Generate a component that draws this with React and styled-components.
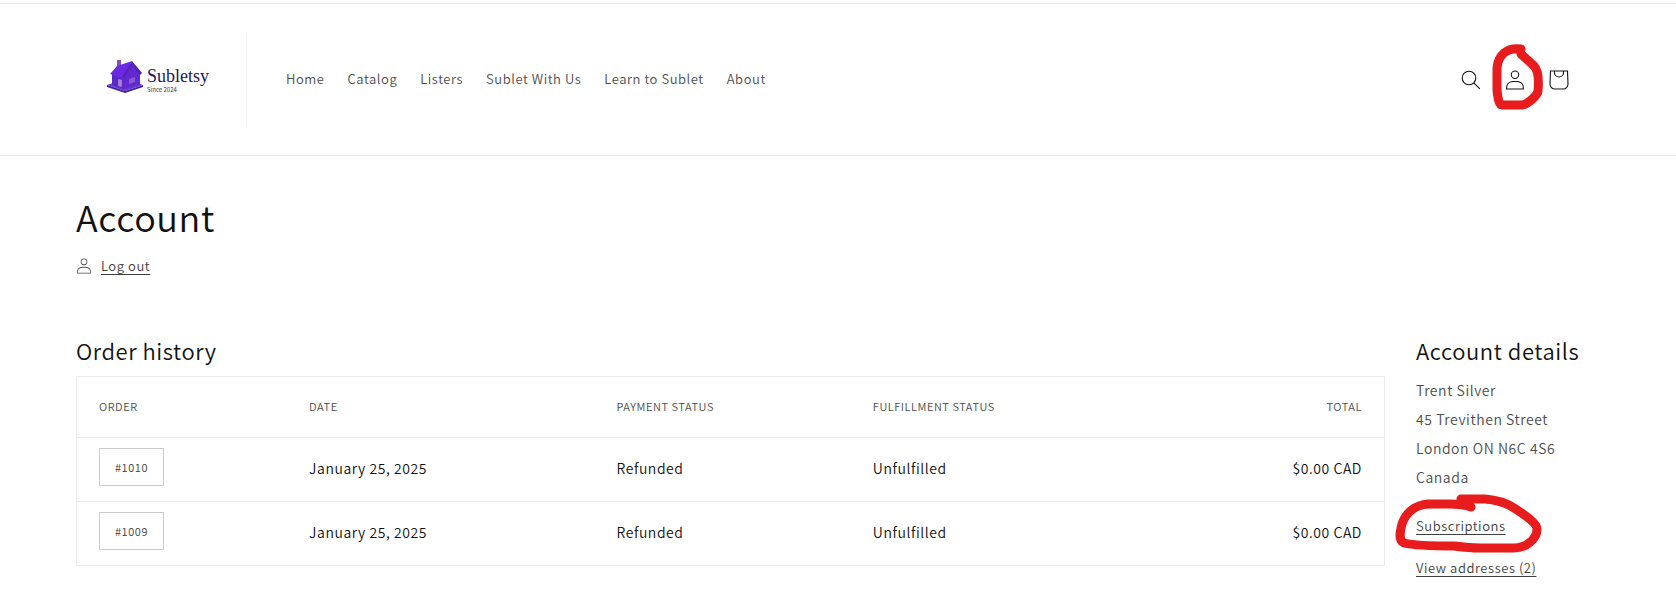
import React from 'react';
import styled, { createGlobalStyle } from 'styled-components';

const GlobalStyle = createGlobalStyle`
    * {
        box-sizing: border-box;
    }
    body {
        margin: 0;
        background-color: #ffffff;
        color: #121212;
        font-family: 'Noto Sans CJK SC', 'Noto Sans', sans-serif;
        font-size: 14px;
        font-weight: 350;
        letter-spacing: 0.04em;
    }
`

const Header = styled.header`
    margin-top: 3px;
    border-top: 1px solid #ebebeb;
    border-bottom: 1px solid #ebebeb;
    padding: 28px 95px 28px 76px;
    display: flex;
    align-items: center;
`

const LogoLink = styled.a`
    width: 171px;
    height: 95px;
    padding-left: 31px;
    padding-bottom: 5px;
    display: flex;
    align-items: center;
    gap: 4px;
    border-right: 1px solid #f7f7f7;
    color: #26145c;
    text-decoration: none;
    letter-spacing: normal;
`

const LogoText = styled.span`
    display: flex;
    flex-direction: column;
    gap: 1px;
    padding-top: 6px;
`

const LogoName = styled.span`
    font-family: 'Liberation Serif', serif;
    font-size: 18px;
    font-weight: 400;
    line-height: 18px;
`

const LogoSince = styled.span`
    font-size: 6px;
    font-weight: 400;
    line-height: 8px;
    color: #33303f;
`

const Nav = styled.nav`
    flex-grow: 1;
    display: flex;
    gap: 23px;
    padding-left: 39px;
    padding-bottom: 1px;
`

const NavLink = styled.a`
    font-size: 13px;
    line-height: 20px;
    color: #4d4d4d;
    text-decoration: none;
`

const Actions = styled.div`
    display: flex;
`

const IconButton = styled.button`
    position: relative;
    width: 44px;
    height: 44px;
    padding: 0;
    border: none;
    background: none;
    color: #121212;
    display: flex;
    align-items: center;
    justify-content: center;
    cursor: pointer;
`

const Main = styled.main`
    padding: 36px 76px 20px;
`

const Title = styled.h1`
    margin: 0;
    font-size: 36px;
    font-weight: 350;
    line-height: 48px;
`

const LogoutRow = styled.div`
    display: flex;
    align-items: center;
    gap: 9px;
    margin-top: 16px;
    color: #4d4d4d;
`

const TextLink = styled.a`
    position: relative;
    font-size: 13px;
    line-height: 20px;
    color: #404040;
    text-decoration: underline;
    text-underline-offset: 3px;
`

const Columns = styled.div`
    display: grid;
    grid-template-columns: minmax(0, 1fr) 184px;
    gap: 31px;
    margin-top: 58px;
`

const Subtitle = styled.h2`
    margin: 0;
    font-size: 22px;
    font-weight: 350;
    line-height: 32px;
    white-space: nowrap;
`

const Table = styled.table`
    width: 100%;
    margin-top: 10px;
    table-layout: fixed;
    border-collapse: collapse;
    border: 1px solid #ebebeb;
`

const Row = styled.tr`
    height: ${props => props.$head ? '61px' : '64px'};
    border-bottom: 1px solid #ebebeb;
`

const HeadCell = styled.th`
    width: ${props => props.$width};
    padding: 0 22px 2px;
    font-size: 11px;
    font-weight: 350;
    text-align: ${props => props.$align || 'left'};
    text-transform: uppercase;
    color: #4d4d4d;
`

const Cell = styled.td`
    padding: 0 22px 3px;
    text-align: ${props => props.$align || 'left'};
`

const OrderLink = styled.a`
    display: block;
    width: fit-content;
    margin-bottom: 2px;
    padding: 0 15px;
    border: 1px solid #cccccc;
    font-size: 11px;
    line-height: 36px;
    color: #404040;
    text-decoration: none;
`

const Details = styled.section`
    display: flex;
    flex-direction: column;
    align-items: flex-start;
`

const Address = styled.address`
    margin: 10px 0 24px;
    font-style: normal;
    line-height: 29px;
    color: #4d4d4d;
    white-space: nowrap;
`

const DetailLinks = styled.div`
    display: flex;
    flex-direction: column;
    align-items: flex-start;
    gap: 22px;
`

const Marker = styled.svg`
    position: absolute;
    left: ${props => props.$left};
    top: ${props => props.$top};
    fill: none;
    stroke: #e81c1c;
    stroke-width: 9;
    stroke-linecap: round;
    stroke-linejoin: round;
    pointer-events: none;
`

const links = ['Home', 'Catalog', 'Listers', 'Sublet With Us', 'Learn to Sublet', 'About'];

const orders = [
    { number: '#1010', date: 'January 25, 2025', payment: 'Refunded', fulfillment: 'Unfulfilled', total: '$0.00 CAD' },
    { number: '#1009', date: 'January 25, 2025', payment: 'Refunded', fulfillment: 'Unfulfilled', total: '$0.00 CAD' },
];

function HouseLogo()
{
    return (
        <svg width="36" height="34" viewBox="0 0 36 34" aria-hidden="true">
            <path d="M0 25 L18 19 L36 25 L18 31 Z" fill="#6a3ad0" />
            <path d="M0 25 L18 31 L36 25 V27 L18 33 L0 27 Z" fill="#43219b" />
            <path d="M5 13 L17 16 V29 L5 25 Z" fill="#5a28c4" />
            <path d="M17 16 L25 4 L33 13 V24 L17 29 Z" fill="#6129cf" />
            <path d="M10 0 H14 V8 H10 Z" fill="#8650b4" />
            <path d="M10 6 L25 1 L16 18 L3 14 Z" fill="#6c2be2" />
            <path d="M25 1 L35 13 L33 15 L25 5 L17 18 L15 17 Z" fill="#5421b8" />
            <path d="M11 19 L15 20 V27 L11 26 Z" fill="#a67ad6" />
            <path d="M22 19 L28 17 V22 L22 24 Z" fill="#8a58d6" />
        </svg>
    )
}

function SearchIcon()
{
    return (
        <svg width="20" height="20" viewBox="0 0 20 20" fill="none" stroke="currentColor" strokeWidth="1.1" aria-hidden="true">
            <circle cx="8" cy="8" r="6.8" />
            <path d="M12.8 12.8 L18.8 18.8" />
        </svg>
    )
}

function AccountIcon({ size })
{
    return (
        <svg width={size} height={size} viewBox="0 0 18 19" fill="none" aria-hidden="true">
            <path fillRule="evenodd" clipRule="evenodd" d="M6 4.5a3 3 0 116 0 3 3 0 01-6 0zm3-4a4 4 0 100 8 4 4 0 000-8zm5.58 12.15c1.12.82 1.83 2.24 1.91 4.85H1.51c.08-2.6.79-4.03 1.9-4.85C4.66 11.75 6.5 11.5 9 11.5s4.35.26 5.58 1.15zM9 10.5c-2.5 0-4.65.24-6.17 1.35C1.27 12.98.5 14.93.5 18v.5h17V18c0-3.07-.77-5.02-2.33-6.15-1.52-1.1-3.67-1.35-6.17-1.35z" fill="currentColor" />
        </svg>
    )
}

function CartIcon()
{
    return (
        <svg width="20" height="20" viewBox="0 0 20 20" fill="none" stroke="currentColor" strokeWidth="1.1" aria-hidden="true">
            <path d="M1.5 1 H18.5 L19 14 A5 5 0 0 1 14 19 H6 A5 5 0 0 1 1 14 Z" />
            <path d="M5.5 1 V2.5 A4.5 4.5 0 0 0 14.5 2.5 V1" />
        </svg>
    )
}

function App()
{
    return (
        <>
            <GlobalStyle />
            <Header>
                <LogoLink href="#">
                    <HouseLogo />
                    <LogoText>
                        <LogoName>Subletsy</LogoName>
                        <LogoSince>Since 2024</LogoSince>
                    </LogoText>
                </LogoLink>
                <Nav>
                    {links.map(item => <NavLink key={item} href="#">{item}</NavLink>)}
                </Nav>
                <Actions>
                    <IconButton aria-label="Search"><SearchIcon /></IconButton>
                    <IconButton aria-label="Account">
                        <AccountIcon size={20} />
                        <Marker $left="-3px" $top="-16px" width="56" height="72" viewBox="0 0 56 72">
                            <path d="M31 7 C17 5 8 13 7 26 L7 48 C8 57 9 63 12 63 H32 C38 62 47 54 48 49 C49 38 48 28 44 24 C40 20 34 15 31 12" />
                        </Marker>
                    </IconButton>
                    <IconButton aria-label="Cart"><CartIcon /></IconButton>
                </Actions>
            </Header>
            <Main>
                <Title>Account</Title>
                <LogoutRow>
                    <AccountIcon size={16} />
                    <TextLink href="#">Log out</TextLink>
                </LogoutRow>
                <Columns>
                    <section>
                        <Subtitle>Order history</Subtitle>
                        <Table>
                            <thead>
                                <Row $head>
                                    <HeadCell $width="16.1%">Order</HeadCell>
                                    <HeadCell $width="23.5%">Date</HeadCell>
                                    <HeadCell $width="19.6%">Payment status</HeadCell>
                                    <HeadCell $width="22%">Fulfillment status</HeadCell>
                                    <HeadCell $align="right">Total</HeadCell>
                                </Row>
                            </thead>
                            <tbody>
                                {orders.map(order => (
                                    <Row key={order.number}>
                                        <Cell><OrderLink href="#">{order.number}</OrderLink></Cell>
                                        <Cell>{order.date}</Cell>
                                        <Cell>{order.payment}</Cell>
                                        <Cell>{order.fulfillment}</Cell>
                                        <Cell $align="right">{order.total}</Cell>
                                    </Row>
                                ))}
                            </tbody>
                        </Table>
                    </section>
                    <Details>
                        <Subtitle>Account details</Subtitle>
                        <Address>
                            Trent Silver<br />
                            45 Trevithen Street<br />
                            London ON N6C 4S6<br />
                            Canada
                        </Address>
                        <DetailLinks>
                            <TextLink href="#">
                                Subscriptions
                                <Marker $left="-24px" $top="-28px" width="154" height="66" viewBox="0 0 154 66">
                                    <path d="M69 11 H93 C106 12 116 16 122 20 C133 27 145 35 145 41 C145 52 133 60 122 60 H88 C80 60 70 59 62 58 C44 58 24 58 12 55 C6 52 8 44 10 36 C14 24 24 17 36 16 H58 C66 16 74 17 79 19" />
                                </Marker>
                            </TextLink>
                            <TextLink href="#">View addresses (2)</TextLink>
                        </DetailLinks>
                    </Details>
                </Columns>
            </Main>
        </>
    )
}

export default App;
